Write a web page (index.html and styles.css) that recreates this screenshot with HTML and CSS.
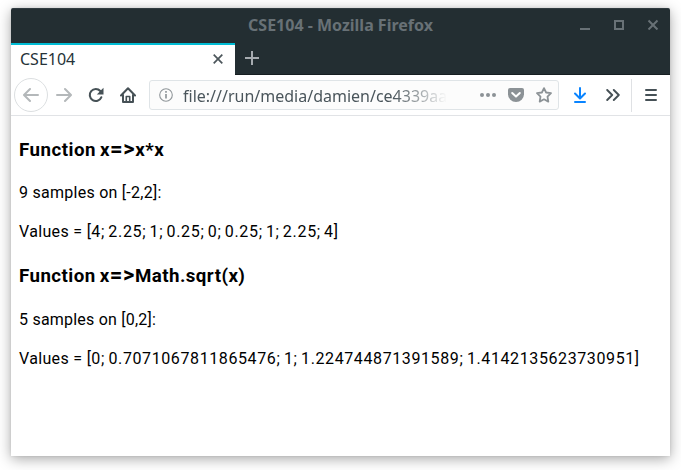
FILE: index.html
```html
<!DOCTYPE html>
<html lang="en">
<head>
<meta charset="utf-8">
<title>CSE104</title>
<link rel="stylesheet" href="styles.css">
</head>
<body>
<div class="window">
  <header class="titlebar">
    <span class="title">CSE104 - Mozilla Firefox</span>
    <svg class="controls" width="80" height="12" viewBox="0 0 80 12" fill="none" stroke="#687176" stroke-width="2">
      <path d="M0 11H10M68.5 2.5l9 9m0-9l-9 9"/><path d="M35 3h8v8h-8z"/>
    </svg>
  </header>
  <div class="tabs">
    <div class="tab"><span>CSE104</span>
      <svg width="10" height="10" viewBox="0 0 10 10" fill="none" stroke="#4c565b" stroke-width="1.7"><path d="M.7.7l8.6 8.6m0-8.6L.7 9.3"/></svg>
    </div>
    <svg class="plus" width="14" height="14" viewBox="0 0 14 14" fill="none" stroke="#a6abb0" stroke-width="2"><path d="M7 0v14M0 7h14"/></svg>
  </div>
  <nav class="toolbar">
    <span class="back"><svg width="16" height="16" viewBox="0 0 16 16" fill="none" stroke="#b4b8ba" stroke-width="2" stroke-linecap="round" stroke-linejoin="round"><path d="M15 8H1.5M7 2L1 8l6 6"/></svg></span>
    <svg class="forward" width="16" height="16" viewBox="0 0 16 16" fill="none" stroke="#b4b8ba" stroke-width="2" stroke-linecap="round" stroke-linejoin="round"><path d="M1 8h13.5M9 2l6 6-6 6"/></svg>
    <svg class="reload" width="16" height="16" viewBox="0 0 16 16" fill="none" stroke="#465156" stroke-width="2.1" stroke-linecap="round"><path d="M13.3 10.3A6 6 0 1 1 12.3 4"/><path d="M15.5.8v6.7H8.8z" fill="#465156" stroke="none"/></svg>
    <svg class="home" width="16" height="16" viewBox="0 0 16 16" fill="none" stroke="#465156" stroke-width="2" stroke-linecap="round" stroke-linejoin="round"><path d="M1 8.5L8 1.3l7 7.2M3 8v7h10V8"/><path d="M6.3 15V9.5h3.4V15" stroke-width="1.6"/><path d="M7 14h2v1H7z" fill="#465156" stroke="none"/></svg>
    <div class="urlbar">
      <svg class="info" width="14" height="14" viewBox="0 0 14 14" fill="none" stroke="#90969a"><circle cx="7" cy="7" r="6.3" stroke-width="1.1"/><path d="M7 6v4.6" stroke-width="1.7"/><path d="M7 3v1.8" stroke-width="1.7"/></svg>
      <span class="url">file:///run/media/damien/ce4339aa</span>
      <svg class="dots" width="16" height="16" viewBox="0 0 16 16" fill="#8c9296"><circle cx="2" cy="8" r="2"/><circle cx="8" cy="8" r="2"/><circle cx="14" cy="8" r="2"/></svg>
      <svg class="pocket" width="16" height="16" viewBox="0 0 16 16"><path d="M2 1h12a2 2 0 0 1 2 2v4.2a8 7.8 0 0 1-16 0V3a2 2 0 0 1 2-2z" fill="#8c9296"/><path d="M4.2 6L8 9.6 11.8 6" fill="none" stroke="#fff" stroke-width="2" stroke-linecap="round" stroke-linejoin="round"/></svg>
      <svg class="star" width="16" height="16" viewBox="0 0 16 16" fill="none" stroke="#8c9296" stroke-width="1.8" stroke-linejoin="round"><path d="M8 1.1l2.1 4.4 4.9.7-3.5 3.4.8 5L8 12.3l-4.3 2.3.8-5L1 6.2l4.9-.7z"/></svg>
    </div>
    <svg class="download" width="14" height="16" viewBox="0 0 14 16" fill="none" stroke="#0a84ff" stroke-width="2" stroke-linecap="round" stroke-linejoin="round"><path d="M7 1v10M2 6.5l5 5 5-5M2 15h10"/></svg>
    <svg class="more" width="14" height="12" viewBox="0 0 14 12" fill="none" stroke="#465156" stroke-width="1.9" stroke-linecap="round" stroke-linejoin="round"><path d="M1.2 1l5 5-5 5M7.8 1l5 5-5 5"/></svg>
    <span class="divider"></span>
    <svg class="menu" width="12" height="12" viewBox="0 0 12 12" fill="none" stroke="#465156" stroke-width="2" stroke-linecap="round"><path d="M1 1h10M1 6h10M1 11h10"/></svg>
  </nav>
  <main class="page">
    <h3 class="first">Function x<span>=&gt;</span>x*x</h3>
    <p>9 samples on [-2,2]:</p>
    <p class="values">Values = [<span>4; 2.25; 1; 0.25; 0; 0.25; 1; 2.25; 4]</span></p>
    <h3 class="second">Function x<span>=&gt;</span>Math.sqrt(x)</h3>
    <p>5 samples on [0,2]:</p>
    <p class="values long">Values = [<span>0; 0.7071067811865476; 1; 1.224744871391589; 1.4142135623730951]</span></p>
  </main>
</div>
</body>
</html>
```
FILE: styles.css
```css
* { box-sizing: border-box; }
html { background: #fff; }
body { margin: 0; padding: 8px 11px 14px; height: 470px; overflow: hidden; }
svg { display: block; flex: none; }
.window {
  height: 448px;
  background: #fff;
  border-radius: 2px 2px 0 0;
  box-shadow: 0 3px 14px rgba(0, 0, 0, .34), 0 0 3px rgba(0, 0, 0, .1);
  font-family: "Noto Sans", sans-serif;
}
.titlebar {
  position: relative;
  height: 35px;
  background: #232e32;
  border-top: 1px solid #303b40;
  border-radius: 2px 2px 0 0;
  display: flex;
  justify-content: center;
  color: #687176;
  font-size: 16px;
  font-weight: 700;
  line-height: 32px;
}
.title { white-space: nowrap; }
.controls { position: absolute; top: 9px; right: 10px; }
.tabs { height: 32px; background: #232e32; border-bottom: 1px solid #161e21; display: flex; align-items: center; }
.tab {
  width: 224px;
  height: 32px;
  align-self: flex-start;
  flex: none;
  background: #fff;
  border-top: 2px solid #00bcd4;
  padding: 0 12px 2px 9px;
  display: flex;
  align-items: center;
  justify-content: space-between;
  color: #263238;
  font-size: 16px;
}
.plus { margin: 0 0 2px 10px; }
.toolbar { height: 41px; border-bottom: 1px solid #e1e3e6; display: flex; align-items: center; padding-left: 3px; }
.back { width: 34px; height: 34px; border: 1px solid #dcdfe1; border-radius: 50%; display: flex; align-items: center; justify-content: center; }
.forward { margin-left: 8px; }
.reload { margin-left: 16px; }
.home { margin-left: 16px; }
.urlbar { width: 410px; height: 30px; margin-left: 13px; background: #fcfcfc; border: 1px solid #dfe4e7; border-radius: 3px; display: flex; align-items: center; padding-left: 9px; }
.url {
  width: 264px;
  margin: 2px 0 0 10px;
  overflow: hidden;
  white-space: nowrap;
  color: #4a555b;
  font-size: 16px;
  -webkit-mask-image: linear-gradient(to right, #000 210px, transparent 264px);
  mask-image: linear-gradient(to right, #000 210px, transparent 264px);
}
.dots { margin-left: 33px; }
.pocket, .star { margin-left: 12px; }
.download { margin-left: 14px; }
.more { margin-left: 19px; }
.divider { width: 1px; height: 33px; margin-left: 11px; background: #dfe1e4; }
.menu { margin-left: 13px; }
.page { padding: 23px 8px 0; font-family: Roboto, sans-serif; color: #000; }
.page h3 { margin: 0; height: 22px; font-size: 18.72px; line-height: 22px; letter-spacing: .48px; word-spacing: -1px; white-space: nowrap; }
.page h3 span { font-size: 22px; line-height: 0; letter-spacing: .6px; }
.page .second { margin-top: 23px; letter-spacing: .45px; }
.page p { margin: 0; font-size: 16px; line-height: 20px; letter-spacing: .26px; white-space: nowrap; }
.page h3 + p { margin-top: 22px; }
.page .second + p { margin-top: 23px; letter-spacing: .22px; }
.page p + p { margin-top: 19px; }
.page .values { letter-spacing: .34px; }
.values span { letter-spacing: .7px; word-spacing: -1.5px; }
.long span { letter-spacing: .6px; word-spacing: -1px; }
```
